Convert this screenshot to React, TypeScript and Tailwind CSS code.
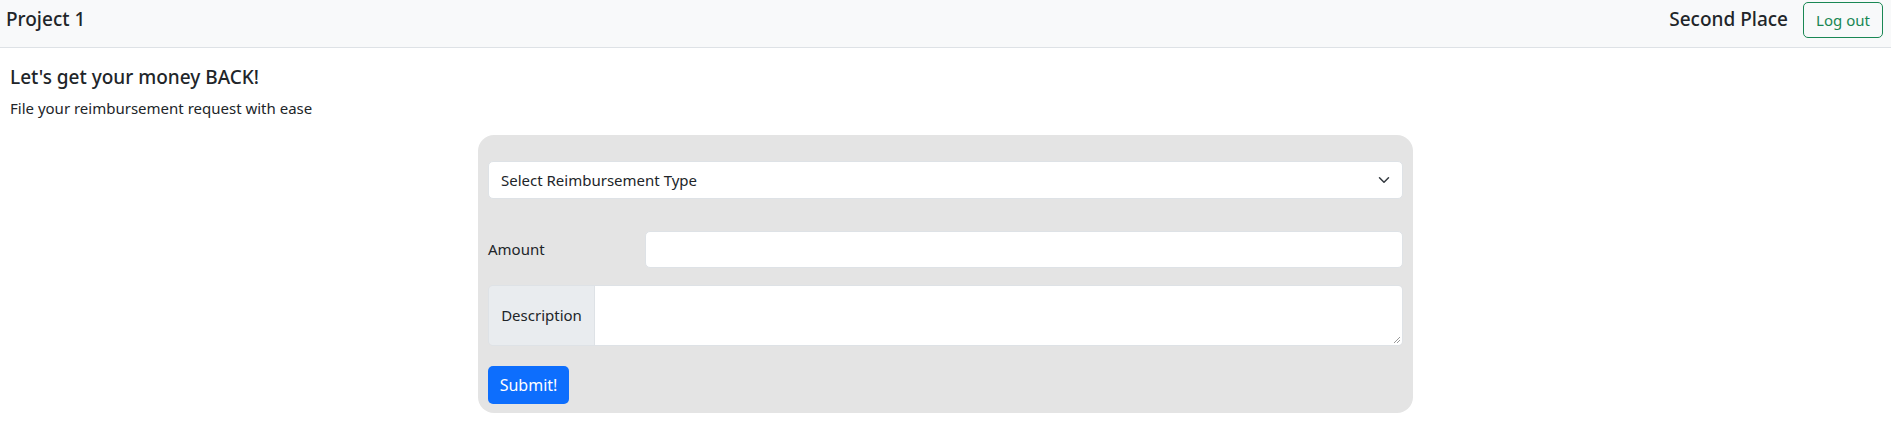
import React from "react";

export default function App() {
  const font = { fontFamily: '"Noto Sans", "Open Sans", sans-serif' };
  return (
    <div className="min-h-[425px] bg-white text-[#212529]" style={font}>
      <nav className="h-[48px] bg-[#f8f9fa] border-b border-[#dee2e6] flex items-start justify-between">
        <div className="pl-[6px] pt-[5px] text-[19px] leading-[28px] font-medium">Project 1</div>
        <div className="flex items-start pt-[2px] pr-[8px]">
          <span className="text-[19px] leading-[28px] font-medium pt-[3px] mr-[15px]">Second Place</span>
          <button className="w-[80px] h-[36px] border border-[#198754] rounded-[5px] text-[#198754] text-[15px]">
            Log out
          </button>
        </div>
      </nav>
      <div className="px-[10px] pt-[17px]">
        <h5 className="text-[19px] leading-[24px] font-medium">Let's get your money BACK!</h5>
        <p className="text-[15px] leading-[24px] mt-[7px]">File your reimbursement request with ease</p>
      </div>
      <div className="w-[935px] mx-auto mt-[15px] bg-[#e4e4e4] rounded-[16px] px-[10px] pt-[26px] pb-[9px]">
        <div className="relative h-[38px] bg-white border border-[#dee2e6] rounded-[5px] flex items-center pl-[12px] text-[15px]">
          <span>Select Reimbursement Type</span>
          <svg className="absolute right-[12px] top-[12px]" width="12" height="12" viewBox="0 0 16 16" fill="none">
            <path d="M2 5l6 6 6-6" stroke="#343a40" strokeWidth="2" strokeLinecap="round" strokeLinejoin="round" />
          </svg>
        </div>
        <div className="flex items-center mt-[32px]">
          <label className="w-[157px] text-[15px]">Amount</label>
          <div className="flex-1 h-[37px] bg-white border border-[#dee2e6] rounded-[5px]" />
        </div>
        <div className="flex mt-[17px] h-[61px] border border-[#dee2e6] rounded-[5px] overflow-hidden">
          <div className="w-[106px] bg-[#e9ecef] border-r border-[#dee2e6] flex items-center justify-center text-[15px]">
            Description
          </div>
          <div className="relative flex-1 bg-white">
            <svg className="absolute right-[1px] bottom-[1px]" width="9" height="9" viewBox="0 0 9 9">
              <path d="M8 2L2 8M8 5L5 8" stroke="#999" strokeWidth="1" />
            </svg>
          </div>
        </div>
        <button className="mt-[20px] w-[81px] h-[38px] bg-[#0d6efd] text-white rounded-[5px] text-[16px]">
          Submit!
        </button>
      </div>
    </div>
  );
}
